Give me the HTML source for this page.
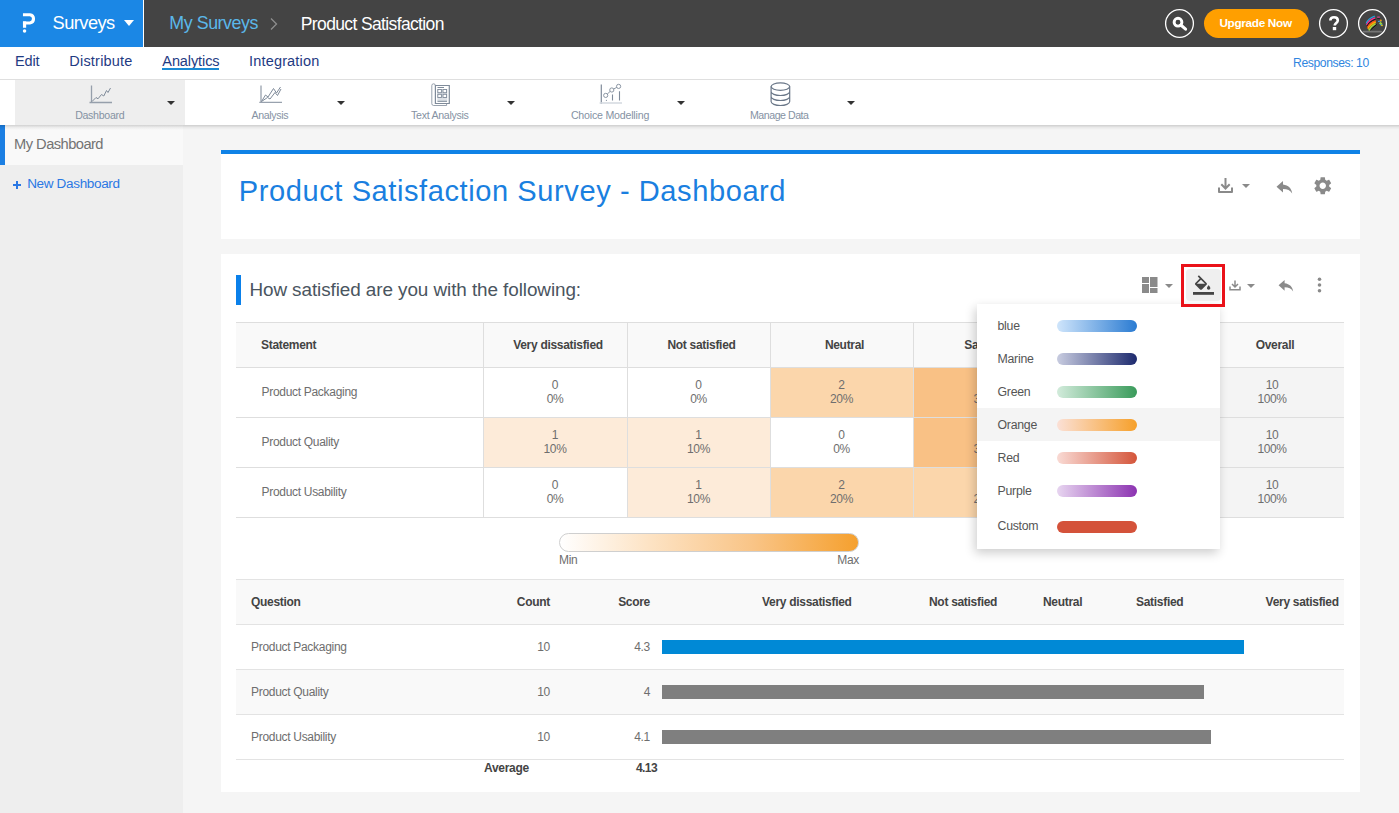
<!DOCTYPE html>
<html><head><meta charset="utf-8">
<style>
*{box-sizing:border-box;margin:0;padding:0}
html,body{width:1399px;height:813px;overflow:hidden}
body{position:relative;background:#f5f5f5;font-family:"Liberation Sans",sans-serif;color:#444}
.a{position:absolute;white-space:nowrap}
.t{line-height:1}
.car{position:absolute;width:0;height:0;border-left:4px solid transparent;border-right:4px solid transparent;border-top:4px solid #333}
.th{font-size:12px;font-weight:bold;color:#444;line-height:1;letter-spacing:-0.3px}
.td{font-size:12px;color:#6e6e6e;line-height:1;letter-spacing:-0.3px}
.cell{font-size:12px;color:#6e6e6e;line-height:14px;text-align:center;letter-spacing:-0.4px}
.dd{font-size:12.3px;color:#555;line-height:1;letter-spacing:-0.25px}
</style></head><body>
<div class="a" style="left:0;top:0;width:1399px;height:47px;background:#444444"></div>
<div class="a" style="left:0;top:0;width:143px;height:47px;background:#1b87e5"></div>
<div class="a" style="left:143px;top:0;width:1px;height:47px;background:#ffffff"></div>
<svg class="a" style="left:18px;top:10px" width="22" height="26" viewBox="18 10 22 26">
 <path d="M22.96 14.75 H29.9 A4.15 4.15 0 0 1 29.9 22.98 H22.96" fill="none" stroke="#fff" stroke-width="3.1"/>
 <rect x="22.96" y="21.4" width="3.2" height="6.35" fill="#fff"/>
 <circle cx="24.55" cy="31.1" r="1.75" fill="#fff"/>
</svg>
<div class="a t" style="left:52.60px;top:13.75px;font-size:18.25px;letter-spacing:-0.548px;color:#ffffff;">Surveys</div>
<div class="a car" style="left:124px;top:20px;border-left-width:5.5px;border-right-width:5.5px;border-top:6px solid #fff"></div>
<div class="a t" style="left:169.30px;top:14.69px;font-size:17.84px;letter-spacing:-0.441px;color:#5bb8ea;">My Surveys</div>
<svg class="a" style="left:269px;top:17px" width="10" height="14" viewBox="0 0 10 14"><path d="M2 1.5 L7.5 7 L2 12.5" fill="none" stroke="#8e8e8e" stroke-width="1.3"/></svg>
<div class="a t" style="left:300.80px;top:15.57px;font-size:17.51px;letter-spacing:-0.632px;color:#ffffff;">Product Satisfaction</div>
<svg class="a" style="left:1163px;top:7px" width="33" height="33" viewBox="0 0 33 33"><circle cx="16.5" cy="16.5" r="13.9" fill="none" stroke="#fff" stroke-width="1.3"/></svg>
<svg class="a" style="left:1170px;top:14px" width="20" height="20" viewBox="0 0 20 20"><circle cx="8" cy="8.2" r="3.9" fill="none" stroke="#fff" stroke-width="2.9"/><path d="M10.8 11 L15.6 15.2" stroke="#fff" stroke-width="3" stroke-linecap="round"/></svg>
<div class="a" style="left:1204px;top:9px;width:105px;height:29px;border-radius:14.5px;background:#ff9f00"></div>
<div class="a t" style="left:1219.40px;top:16.84px;font-size:11.77px;letter-spacing:-0.318px;font-weight:bold;color:#ffffff;">Upgrade Now</div>
<svg class="a" style="left:1317px;top:7px" width="33" height="33" viewBox="0 0 33 33"><circle cx="16.5" cy="16.5" r="13.9" fill="none" stroke="#fff" stroke-width="1.3"/></svg>
<svg class="a" style="left:1328px;top:16px" width="12" height="15" viewBox="0 0 12 15"><path d="M2.3 4.6 C2.3 2.3 3.8 1.3 6 1.3 C8.3 1.3 9.8 2.6 9.8 4.4 C9.8 6.6 7.2 7 6.8 9 L6.8 9.6" fill="none" stroke="#fff" stroke-width="2.6"/><rect x="4.8" y="11" width="3.4" height="3.2" fill="#fff"/></svg>
<svg class="a" style="left:1356px;top:7px" width="33" height="33" viewBox="0 0 33 33"><circle cx="16.5" cy="16.5" r="13.9" fill="none" stroke="#fff" stroke-width="1.3"/></svg>
<svg class="a" style="left:1356px;top:8px" width="34" height="32" viewBox="1356 8 34 32">
 <rect x="1362.7" y="30.8" width="19.3" height="1.8" rx=".9" fill="#8a8a8a" opacity=".7"/>
 <path d="M1366.3 23.5 Q1368 18.5 1374.8 16.2" fill="none" stroke="#20a4e0" stroke-width="1.3"/>
 <path d="M1366.6 25 Q1368.5 20 1375.2 17.8" fill="none" stroke="#ff2a8c" stroke-width="1.4"/>
 <path d="M1367 26.2 Q1369 21.5 1375.5 19.3" fill="none" stroke="#111" stroke-width="1"/>
 <path d="M1367.4 27.4 Q1369.5 22.8 1375.8 20.6" fill="none" stroke="#ff4a1a" stroke-width="1.3"/>
 <path d="M1367.9 28.8 Q1370 24.3 1375.8 22" fill="none" stroke="#ffa800" stroke-width="1.5"/>
 <path d="M1368.8 30.3 Q1371 26 1375.5 23.6" fill="none" stroke="#a6dc3a" stroke-width="1.6"/>
 <path d="M1370.5 30 L1376.8 24.4" fill="none" stroke="#111" stroke-width="1"/>
 <path d="M1377.2 17.2 H1379.8" stroke="#ff4fa8" stroke-width="1.1"/>
 <path d="M1377.2 18.3 H1379.8" stroke="#111" stroke-width=".8"/>
 <path d="M1378 21.5 L1381.5 20.8 M1379.5 23 L1381 25 L1382.5 24.5" stroke="#3fa0e0" stroke-width="1.2" fill="none"/>
 <path d="M1379.8 22.5 L1381.8 24.2" stroke="#9ad63a" stroke-width="1.8"/>
 <circle cx="1380.8" cy="20.5" r=".9" fill="#ff9a00"/><circle cx="1382" cy="25.5" r=".8" fill="#ffd000"/>
</svg>
<div class="a" style="left:0;top:47px;width:1399px;height:33px;background:#fff;border-bottom:1px solid #dfdfdf"></div>
<div class="a t" style="left:14.90px;top:53.59px;font-size:14.53px;letter-spacing:-0.101px;color:#1f3b83;">Edit</div>
<div class="a t" style="left:69.30px;top:53.59px;font-size:14.53px;letter-spacing:0.200px;color:#1f3b83;">Distribute</div>
<div class="a t" style="left:162.30px;top:53.69px;font-size:14.53px;letter-spacing:-0.098px;color:#1f3b83;">Analytics</div>
<div class="a t" style="left:249.10px;top:53.69px;font-size:14.53px;letter-spacing:0.151px;color:#1f3b83;">Integration</div>
<div class="a t" style="left:1293.10px;top:56.60px;font-size:12.16px;letter-spacing:-0.420px;color:#2f86e0;">Responses: 10</div>
<div class="a" style="left:162px;top:68px;width:57px;height:2px;background:#1a8ad4"></div>
<div class="a" style="left:0;top:80px;width:1399px;height:45px;background:#fff"></div>
<div class="a" style="left:15px;top:80px;width:170px;height:45px;background:#eeeeee"></div>
<svg class="a" style="left:85px;top:83px" width="30" height="23" viewBox="85 83 30 23">
 <path d="M91.5 85.5 V102.5 M89.5 102.5 H112" fill="none" stroke="#7f8b9a" stroke-width="1.3" opacity=".8"/>
 <path d="M92 101.5 L96 97.5 L98 98.8 L101.5 94.5 L103.8 96 L106.5 90.5 L108 92.5 L110.5 88" fill="none" stroke="#7f8b9a" stroke-width="1"/>
</svg>
<svg class="a" style="left:255px;top:83px" width="30" height="23" viewBox="255 83 30 23">
 <path d="M261 85.5 V102.5 M259.3 102.3 H282" fill="none" stroke="#7f8b9a" stroke-width="1.3" opacity=".8"/>
 <path d="M261.5 101.5 L265.5 95 L268 97 L273.5 88.5 L276.5 93 L280.5 87" fill="none" stroke="#7f8b9a" stroke-width="1"/>
 <path d="M261.5 101.5 L267.5 97.5 L270 99 L275 92.5 L277.5 95.5 L281 89" fill="none" stroke="#7f8b9a" stroke-width="1"/>
</svg>
<svg class="a" style="left:428px;top:81px" width="24" height="27" viewBox="428 81 24 27">
 <path d="M435.4 85.5 H449.3 V103.5 H435.4 Z" fill="none" stroke="#7f8b9a" stroke-width="1.2"/>
 <path d="M435.4 85.6 A1.8 1.8 0 0 0 431.8 85.6 V103.6 A1.9 1.9 0 0 0 433.7 105.5 H446.6 V103.6" fill="none" stroke="#7f8b9a" stroke-width="1" opacity=".8"/>
 <path d="M437.5 87.5 H444" stroke="#7f8b9a" stroke-width="1"/>
 <rect x="437.3" y="89" width="10" height="12.6" fill="#dde1e6"/>
 <rect x="437.8" y="89.5" width="3.6" height="3.2" fill="#fff" stroke="#7f8b9a" stroke-width=".9"/>
 <rect x="443" y="89.5" width="3.6" height="3.2" fill="#fff" stroke="#7f8b9a" stroke-width=".9"/>
 <rect x="437.8" y="94.3" width="3.6" height="3.2" fill="#fff" stroke="#7f8b9a" stroke-width=".9"/>
 <rect x="443" y="94.3" width="3.6" height="3.2" fill="#fff" stroke="#7f8b9a" stroke-width=".9"/>
 <path d="M437.5 101.3 H447" stroke="#7f8b9a" stroke-width="1"/>
</svg>
<svg class="a" style="left:597px;top:82px" width="28" height="25" viewBox="597 82 28 25">
 <path d="M601.3 84.5 V104" stroke="#7f8b9a" stroke-width="1.2"/>
 <path d="M599.6 103 H622" stroke="#d6dbe1" stroke-width="1.6"/>
 <circle cx="605.7" cy="95.4" r="2.1" fill="none" stroke="#7f8b9a" stroke-width=".9"/>
 <circle cx="611.8" cy="90" r="2.1" fill="none" stroke="#7f8b9a" stroke-width=".9"/>
 <circle cx="618.6" cy="86.4" r="2.1" fill="none" stroke="#7f8b9a" stroke-width=".9"/>
 <path d="M607.3 94 L610.2 91.4 M613.6 89 L616.8 87.4" stroke="#7f8b9a" stroke-width=".9"/>
 <path d="M612.5 94.5 V100.5 M619.5 91.2 V100.5" stroke="#7f8b9a" stroke-width="1.1"/>
 <circle cx="606.4" cy="100.3" r=".6" fill="#7f8b9a"/>
</svg>
<svg class="a" style="left:768px;top:80px" width="26" height="28" viewBox="768 80 26 28">
 <ellipse cx="780.4" cy="86.6" rx="9.3" ry="3.7" fill="none" stroke="#6a7788" stroke-width="1.2"/>
 <path d="M771.1 86.6 V101.6 A9.3 3.9 0 0 0 789.7 101.6 V86.6 M771.1 91.6 A9.3 3.9 0 0 0 789.7 91.6 M771.1 96.6 A9.3 3.9 0 0 0 789.7 96.6" fill="none" stroke="#6a7788" stroke-width="1.2"/>
</svg>
<div class="a t" style="left:75.20px;top:109.52px;font-size:10.61px;letter-spacing:-0.313px;color:#8592a3;">Dashboard</div>
<div class="a t" style="left:251.60px;top:109.62px;font-size:10.61px;letter-spacing:-0.372px;color:#8592a3;">Analysis</div>
<div class="a t" style="left:411.10px;top:109.62px;font-size:10.61px;letter-spacing:-0.300px;color:#8592a3;">Text Analysis</div>
<div class="a t" style="left:570.90px;top:109.62px;font-size:10.61px;letter-spacing:-0.199px;color:#8592a3;">Choice Modelling</div>
<div class="a t" style="left:750.00px;top:109.62px;font-size:10.61px;letter-spacing:-0.470px;color:#8592a3;">Manage Data</div>
<div class="a car" style="left:167px;top:101px"></div>
<div class="a car" style="left:337px;top:101px"></div>
<div class="a car" style="left:507px;top:101px"></div>
<div class="a car" style="left:677px;top:101px"></div>
<div class="a car" style="left:847px;top:101px"></div>
<div class="a" style="left:0;top:125px;width:183px;height:688px;background:#eeeeee"></div>
<div class="a" style="left:0;top:125px;width:183px;height:40px;background:#f9f9f9"></div>
<div class="a" style="left:0;top:125px;width:5px;height:40px;background:#1b7fe3"></div>
<div class="a" style="left:0;top:125px;width:1399px;height:5px;background:linear-gradient(rgba(0,0,0,.16),rgba(0,0,0,.05) 50%,rgba(0,0,0,0))"></div>
<div class="a t" style="left:14.10px;top:136.57px;font-size:14.68px;letter-spacing:-0.545px;color:#737373;">My Dashboard</div>
<div class="a" style="left:13px;top:184.3px;width:8.4px;height:1.6px;background:#2a78e4"></div>
<div class="a" style="left:16.4px;top:181px;width:1.6px;height:8.2px;background:#2a78e4"></div>
<div class="a t" style="left:27.20px;top:176.55px;font-size:13.52px;letter-spacing:-0.341px;color:#2a78e4;">New Dashboard</div>
<div class="a" style="left:221px;top:150px;width:1139px;height:89px;background:#fff;border-top:4px solid #0f82e6"></div>
<div class="a t" style="left:238.83px;top:176.79px;font-size:29.07px;letter-spacing:0.571px;color:#1a7fe0;">Product Satisfaction Survey - Dashboard</div>
<div class="a" style="left:221px;top:254px;width:1139px;height:538px;background:#fff"></div>
<div class="a" style="left:236px;top:275px;width:5px;height:30px;background:#0a80ea"></div>
<div class="a t" style="left:249.40px;top:280.60px;font-size:18.90px;letter-spacing:-0.081px;color:#4a5560;">How satisfied are you with the following:</div>
<svg class="a" style="left:1217px;top:177px" width="17" height="17" viewBox="0 0 17 17"><path d="M8.5 1 V11.5 M4.3 7.3 L8.5 11.5 L12.7 7.3" fill="none" stroke="#8a8a8a" stroke-width="2"/><path d="M2 10.5 V15 H15 V10.5" fill="none" stroke="#8a8a8a" stroke-width="2" stroke-linejoin="round"/></svg>
<div class="a car" style="left:1242px;top:184px;border-top-color:#8a8a8a"></div>
<svg class="a" style="left:1276px;top:179.5px" width="17" height="14" viewBox="0 0 17 14"><path d="M7 1 L0.5 6.8 L7 12.6 V8.9 C11.5 8.9 14.3 10.2 16.2 13.4 C15.5 8.5 12.5 5.3 7 4.6 Z" fill="#8a8a8a"/></svg>
<svg class="a" style="left:1312px;top:174.6px" width="21.5" height="21.5" viewBox="0 0 24 24"><path fill="#8a8a8a" d="M19.14 12.94c.04-.3.06-.61.06-.94 0-.32-.02-.64-.07-.94l2.03-1.58c.18-.14.23-.41.12-.61l-1.92-3.32c-.12-.22-.37-.29-.59-.22l-2.39.96c-.5-.38-1.03-.7-1.62-.94l-.36-2.54c-.04-.24-.24-.41-.48-.41h-3.84c-.24 0-.43.17-.47.41l-.36 2.54c-.59.24-1.13.57-1.62.94l-2.39-.96c-.22-.08-.47 0-.59.22L2.74 8.87c-.12.21-.08.47.12.61l2.03 1.58c-.05.3-.09.63-.09.94s.02.64.07.94l-2.03 1.58c-.18.14-.23.41-.12.61l1.92 3.32c.12.22.37.29.59.22l2.39-.96c.5.38 1.03.7 1.62.94l.36 2.54c.05.24.24.41.48.41h3.840c.24 0 .44-.17.47-.41l.36-2.54c.59-.24 1.13-.56 1.62-.94l2.39.96c.22.08.47 0 .59-.22l1.92-3.32c.12-.22.07-.47-.12-.61l-2.01-1.58zM12 15.6c-1.98 0-3.6-1.62-3.6-3.6s1.62-3.6 3.6-3.6 3.6 1.62 3.6 3.6-1.62 3.6-3.6 3.6z"/></svg>
<svg class="a" style="left:1141.5px;top:277px" width="16" height="16" viewBox="0 0 16 16"><rect x="0" y="0" width="7" height="6" fill="#8a8a8a"/><rect x="0" y="7" width="7" height="9" fill="#8a8a8a"/><rect x="8" y="0" width="7.5" height="10" fill="#8a8a8a"/><rect x="8" y="11" width="7.5" height="5" fill="#8a8a8a"/></svg>
<div class="a car" style="left:1165px;top:283.5px;border-top-color:#8a8a8a;border-left-width:4.5px;border-right-width:4.5px;border-top-width:4.5px"></div>
<svg class="a" style="left:1229px;top:279.5px" width="12" height="11" viewBox="0 0 12 11"><path d="M6 0.5 V7 M3 4 L6 7 L9 4" fill="none" stroke="#8a8a8a" stroke-width="1.5"/><path d="M1 6.5 V9.8 H11 V6.5" fill="none" stroke="#8a8a8a" stroke-width="1.5"/></svg>
<div class="a car" style="left:1247px;top:283.5px;border-top-color:#8a8a8a;border-left-width:4.5px;border-right-width:4.5px;border-top-width:4.5px"></div>
<svg class="a" style="left:1277.5px;top:279px" width="16" height="13" viewBox="0 0 17 14"><path d="M7 1 L0.5 6.8 L7 12.6 V8.9 C11.5 8.9 14.3 10.2 16.2 13.4 C15.5 8.5 12.5 5.3 7 4.6 Z" fill="#8a8a8a"/></svg>
<svg class="a" style="left:1316px;top:277px" width="7" height="16" viewBox="0 0 7 16"><circle cx="3.5" cy="2.2" r="1.8" fill="#8a8a8a"/><circle cx="3.5" cy="8" r="1.8" fill="#8a8a8a"/><circle cx="3.5" cy="13.8" r="1.8" fill="#8a8a8a"/></svg>
<div class="a" style="left:236px;top:322px;width:1108px;height:45px;background:#f9f9f9"></div>
<div class="a cell" style="left:483.0px;top:367px;width:144.0px;height:50px;background:#ffffff;padding-top:10.5px">0<br>0%</div>
<div class="a cell" style="left:627.0px;top:367px;width:143.0px;height:50px;background:#ffffff;padding-top:10.5px">0<br>0%</div>
<div class="a cell" style="left:770.0px;top:367px;width:143.0px;height:50px;background:#fbd6ab;padding-top:10.5px">2<br>20%</div>
<div class="a cell" style="left:913.0px;top:367px;width:144.0px;height:50px;background:#f9c185;padding-top:10.5px">3<br>30%</div>
<div class="a cell" style="left:1057.0px;top:367px;width:143.0px;height:50px;background:#f6a24a;padding-top:10.5px">5<br>50%</div>
<div class="a cell" style="left:1200.0px;top:367px;width:144.0px;height:50px;background:#f4f4f4;padding-top:10.5px">10<br>100%</div>
<div class="a cell" style="left:483.0px;top:417px;width:144.0px;height:50px;background:#fdebd9;padding-top:10.5px">1<br>10%</div>
<div class="a cell" style="left:627.0px;top:417px;width:143.0px;height:50px;background:#fdebd9;padding-top:10.5px">1<br>10%</div>
<div class="a cell" style="left:770.0px;top:417px;width:143.0px;height:50px;background:#ffffff;padding-top:10.5px">0<br>0%</div>
<div class="a cell" style="left:913.0px;top:417px;width:144.0px;height:50px;background:#f9c185;padding-top:10.5px">3<br>30%</div>
<div class="a cell" style="left:1057.0px;top:417px;width:143.0px;height:50px;background:#f6a24a;padding-top:10.5px">5<br>50%</div>
<div class="a cell" style="left:1200.0px;top:417px;width:144.0px;height:50px;background:#f4f4f4;padding-top:10.5px">10<br>100%</div>
<div class="a cell" style="left:483.0px;top:467px;width:144.0px;height:50px;background:#ffffff;padding-top:10.5px">0<br>0%</div>
<div class="a cell" style="left:627.0px;top:467px;width:143.0px;height:50px;background:#fdebd9;padding-top:10.5px">1<br>10%</div>
<div class="a cell" style="left:770.0px;top:467px;width:143.0px;height:50px;background:#fbd6ab;padding-top:10.5px">2<br>20%</div>
<div class="a cell" style="left:913.0px;top:467px;width:144.0px;height:50px;background:#fbd6ab;padding-top:10.5px">2<br>20%</div>
<div class="a cell" style="left:1057.0px;top:467px;width:143.0px;height:50px;background:#f6a24a;padding-top:10.5px">5<br>50%</div>
<div class="a cell" style="left:1200.0px;top:467px;width:144.0px;height:50px;background:#f4f4f4;padding-top:10.5px">10<br>100%</div>
<div class="a" style="left:236px;top:322px;width:1108px;height:1px;background:#dedede"></div>
<div class="a" style="left:236px;top:367px;width:1108px;height:1px;background:#dedede"></div>
<div class="a" style="left:236px;top:417px;width:1108px;height:1px;background:#dedede"></div>
<div class="a" style="left:236px;top:467px;width:1108px;height:1px;background:#dedede"></div>
<div class="a" style="left:236px;top:517px;width:1108px;height:1px;background:#dedede"></div>
<div class="a" style="left:483.0px;top:322px;width:1px;height:195px;background:#dedede"></div>
<div class="a" style="left:627.0px;top:322px;width:1px;height:195px;background:#dedede"></div>
<div class="a" style="left:770.0px;top:322px;width:1px;height:195px;background:#dedede"></div>
<div class="a" style="left:913.0px;top:322px;width:1px;height:195px;background:#dedede"></div>
<div class="a" style="left:1057.0px;top:322px;width:1px;height:195px;background:#dedede"></div>
<div class="a" style="left:1200.0px;top:322px;width:1px;height:195px;background:#dedede"></div>
<div class="a th" style="left:261px;top:338.74px">Statement</div>
<div class="a th" style="left:486.0px;top:338.74px;width:144.0px;text-align:center">Very dissatisfied</div>
<div class="a th" style="left:630.0px;top:338.74px;width:143.0px;text-align:center">Not satisfied</div>
<div class="a th" style="left:773.0px;top:338.74px;width:143.0px;text-align:center">Neutral</div>
<div class="a th" style="left:916.0px;top:338.74px;width:144.0px;text-align:center">Satisfied</div>
<div class="a th" style="left:1060.0px;top:338.74px;width:143.0px;text-align:center">Very satisfied</div>
<div class="a th" style="left:1203.0px;top:338.74px;width:144.0px;text-align:center">Overall</div>
<div class="a td" style="left:261.5px;top:385.64px">Product Packaging</div>
<div class="a td" style="left:261.5px;top:435.64px">Product Quality</div>
<div class="a td" style="left:261.5px;top:485.64px">Product Usability</div>
<div class="a" style="left:559px;top:533px;width:300px;height:19px;border-radius:9.5px;border:1px solid #cfcfcf;background:linear-gradient(to right,#ffffff,#fde3c4 30%,#f9c486 65%,#f5a02e)"></div>
<div class="a td" style="left:559px;top:553.84px">Min</div>
<div class="a td" style="left:759px;top:553.84px;width:100px;text-align:right">Max</div>
<div class="a" style="left:236px;top:579px;width:1108px;height:45px;background:#f9f9f9"></div>
<div class="a th" style="left:251px;top:595.74px">Question</div>
<div class="a th" style="left:450px;top:595.74px;width:100px;text-align:right">Count</div>
<div class="a th" style="left:550px;top:595.74px;width:100px;text-align:right">Score</div>
<div class="a th" style="left:762px;top:595.74px">Very dissatisfied</div>
<div class="a th" style="left:929px;top:595.74px">Not satisfied</div>
<div class="a th" style="left:1043px;top:595.74px">Neutral</div>
<div class="a th" style="left:1136px;top:595.74px">Satisfied</div>
<div class="a th" style="left:1265.6px;top:595.74px">Very satisfied</div>
<div class="a" style="left:236px;top:624px;width:1108px;height:45px;background:#ffffff"></div>
<div class="a td" style="left:251px;top:640.74px">Product Packaging</div>
<div class="a td" style="left:450px;top:640.74px;width:100px;text-align:right">10</div>
<div class="a td" style="left:550px;top:640.74px;width:100px;text-align:right">4.3</div>
<div class="a" style="left:662px;top:640px;width:582px;height:14px;background:#0089d6"></div>
<div class="a" style="left:236px;top:669px;width:1108px;height:45px;background:#f9f9f9"></div>
<div class="a td" style="left:251px;top:685.74px">Product Quality</div>
<div class="a td" style="left:450px;top:685.74px;width:100px;text-align:right">10</div>
<div class="a td" style="left:550px;top:685.74px;width:100px;text-align:right">4</div>
<div class="a" style="left:662px;top:685px;width:542px;height:14px;background:#7f7f7f"></div>
<div class="a" style="left:236px;top:714px;width:1108px;height:45px;background:#ffffff"></div>
<div class="a td" style="left:251px;top:730.74px">Product Usability</div>
<div class="a td" style="left:450px;top:730.74px;width:100px;text-align:right">10</div>
<div class="a td" style="left:550px;top:730.74px;width:100px;text-align:right">4.1</div>
<div class="a" style="left:662px;top:730px;width:549px;height:14px;background:#7f7f7f"></div>
<div class="a" style="left:236px;top:579px;width:1108px;height:1px;background:#e3e3e3"></div>
<div class="a" style="left:236px;top:624px;width:1108px;height:1px;background:#e3e3e3"></div>
<div class="a" style="left:236px;top:669px;width:1108px;height:1px;background:#e3e3e3"></div>
<div class="a" style="left:236px;top:714px;width:1108px;height:1px;background:#e3e3e3"></div>
<div class="a" style="left:236px;top:759px;width:1108px;height:1px;background:#e3e3e3"></div>
<div class="a th" style="left:484px;top:761.84px">Average</div>
<div class="a th" style="left:636px;top:761.84px;letter-spacing:-0.6px">4.13</div>
<div class="a" style="left:977px;top:304px;width:243px;height:245px;background:#fff;box-shadow:-2px 4px 10px rgba(0,0,0,.2)"></div>
<div class="a" style="left:977px;top:408px;width:243px;height:33px;background:#f4f4f4"></div>
<div class="a dd" style="left:997.5px;top:319.99px">blue</div>
<div class="a" style="left:1057px;top:319.5px;width:80px;height:12px;border-radius:6px;background:linear-gradient(to right,#cfe5fb,#2a7bd2)"></div>
<div class="a dd" style="left:997.5px;top:353.09px">Marine</div>
<div class="a" style="left:1057px;top:352.6px;width:80px;height:12px;border-radius:6px;background:linear-gradient(to right,#c8cce0,#1d2a6e)"></div>
<div class="a dd" style="left:997.5px;top:386.09px">Green</div>
<div class="a" style="left:1057px;top:385.6px;width:80px;height:12px;border-radius:6px;background:linear-gradient(to right,#d2ebdb,#3a9b5b)"></div>
<div class="a dd" style="left:997.5px;top:418.99px">Orange</div>
<div class="a" style="left:1057px;top:418.5px;width:80px;height:12px;border-radius:6px;background:linear-gradient(to right,#fbe0d6,#f6a02a)"></div>
<div class="a dd" style="left:997.5px;top:452.09px">Red</div>
<div class="a" style="left:1057px;top:451.6px;width:80px;height:12px;border-radius:6px;background:linear-gradient(to right,#f9dad4,#d4553a)"></div>
<div class="a dd" style="left:997.5px;top:485.19px">Purple</div>
<div class="a" style="left:1057px;top:484.7px;width:80px;height:12px;border-radius:6px;background:linear-gradient(to right,#e7d5f0,#8c33b1)"></div>
<div class="a dd" style="left:997.5px;top:520.29px">Custom</div>
<div class="a" style="left:1057px;top:521.0px;width:80px;height:12px;border-radius:6px;background:linear-gradient(to right,#d4523a,#d4523a)"></div>
<div class="a" style="left:1181px;top:264px;width:44px;height:43px;border:3px solid #ea1219"></div>
<div class="a" style="left:1185.5px;top:268.5px;width:35px;height:32px;border-radius:4px;background:#efefef"></div>
<svg class="a" style="left:1180px;top:262px" width="48" height="48" viewBox="1180 262 48 48">
 <g transform="translate(1192.4 275.3) scale(0.855)" fill="#454545"><path d="M16.56 8.94L7.62 0 6.21 1.41l2.38 2.38-5.15 5.150c-.59.59-.59 1.54 0 2.12l5.5 5.5c.29.29.68.44 1.06.44s.77-.15 1.06-.44l5.5-5.5c.59-.58.59-1.53 0-2.12zM5.21 10L10 5.21 14.79 10H5.21zM19 11.5s-2 2.17-2 3.5c0 1.1.9 2 2 2s2-.9 2-2c0-1.33-2-3.5-2-3.5z"/></g>
 <rect x="1193" y="292" width="21" height="2.8" fill="#454545"/>
</svg>
</body></html>
